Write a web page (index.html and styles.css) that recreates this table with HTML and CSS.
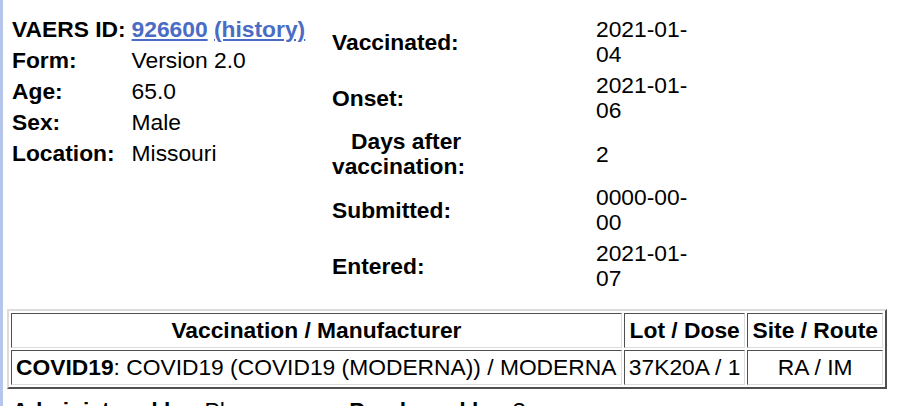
FILE: index.html
```html
<!DOCTYPE html>
<html lang="en">
<head>
<meta charset="utf-8">
<title>VAERS 926600</title>
<link rel="stylesheet" href="styles.css">
</head>
<body>
<div class="page">
  <div class="top">
    <table class="summary">
      <tr><th>VAERS ID:</th><td class="ids"><a href="#">926600</a> <a href="#">(history)</a></td></tr>
      <tr><th>Form:</th><td>Version 2.0</td></tr>
      <tr><th>Age:</th><td>65.0</td></tr>
      <tr><th>Sex:</th><td>Male</td></tr>
      <tr><th>Location:</th><td>Missouri</td></tr>
    </table>
    <table class="dates">
      <colgroup><col class="label-col"><col class="val-col"></colgroup>
      <tr><th>Vaccinated:</th><td class="val">2021-01-<wbr>04</td></tr>
      <tr><th>Onset:</th><td class="val">2021-01-<wbr>06</td></tr>
      <tr><th class="indent">Days after<br>vaccination:</th><td class="val">2</td></tr>
      <tr><th>Submitted:</th><td class="val">0000-00-<wbr>00</td></tr>
      <tr><th>Entered:</th><td class="val">2021-01-<wbr>07</td></tr>
    </table>
  </div>
  <table class="vax">
    <tr><th>Vaccination / Manufacturer</th><th>Lot / Dose</th><th>Site / Route</th></tr>
    <tr><td><b>COVID19</b>: COVID19 (COVID19 (MODERNA)) / MODERNA</td><td>37K20A / 1</td><td class="center">RA / IM</td></tr>
  </table>
  <div class="admin">
    <div><b>Administered by:</b> Pharmacy</div>
    <div><b>Purchased by:</b> ?</div>
  </div>
</div>
</body>
</html>
```

FILE: styles.css
```css
html, body {
  margin: 0;
  padding: 0;
  background: #ffffff;
}

body {
  font-family: "Liberation Sans", Arial, Helvetica, sans-serif;
  font-size: 22.8px;
  color: #000000;
}

.page {
  border-left: 3px solid #b6c6ea;
  padding-left: 4px;
  min-height: 100vh;
  box-sizing: border-box;
}

.top {
  display: grid;
  grid-template-columns: 320px auto;
  justify-items: start;
  align-items: start;
  padding-top: 13px;
  padding-left: 1px;
}

table {
  border-collapse: separate;
  border-spacing: 2px;
  font-size: inherit;
}

.summary th,
.summary td,
.dates th,
.dates td {
  padding: 2px;
  line-height: 25px;
  vertical-align: middle;
}

.summary th,
.dates th {
  text-align: left;
  font-weight: bold;
  white-space: nowrap;
}

.summary td {
  text-align: left;
  white-space: nowrap;
}

.ids a {
  color: #4a6cc4;
  font-weight: bold;
  text-decoration: underline;
}

.dates {
  table-layout: fixed;
  width: 364px;
}

.dates .label-col {
  width: 262px;
}

.dates .val-col {
  width: 96px;
}

.dates th.indent {
  text-indent: 19px;
}

.dates td.val {
  text-align: left;
}

.vax {
  width: 880px;
  margin-top: 14px;
  border-width: 2px;
  border-style: solid;
  border-color: #dcdcdc #4f4f4f #4f4f4f #dcdcdc;
}

.vax th,
.vax td {
  padding: 3px 4px;
  line-height: 27px;
  border-width: 1px;
  border-style: solid;
  border-color: #4f4f4f #dcdcdc #dcdcdc #4f4f4f;
  white-space: nowrap;
}

.vax th {
  text-align: center;
  font-weight: bold;
}

.vax td {
  text-align: left;
}

.vax td.center {
  text-align: center;
}

.admin {
  display: flex;
  gap: 42px;
  margin-top: 9px;
  padding-left: 5px;
  line-height: 25px;
}
```
